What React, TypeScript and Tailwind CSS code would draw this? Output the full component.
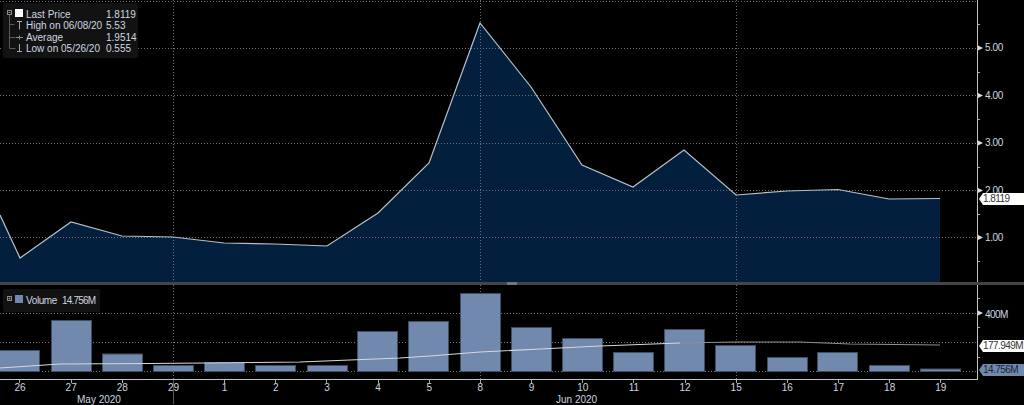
// Price and volume chart, dark terminal style
const font = "font-['Liberation_Sans',sans-serif]"

const pricePoints =
  '0,215 20,258 71,222 122,236 173,237 224,243 275,244 327,246 378,213 429,163 480,23 531,87 582,165 633,187 684,150 736,195 787,191 838,189.5 889,199 940,198.5'

const volumeLeft =
  '0,368 60,364 150,363.5 300,362 350,360 400,358 430,356 480,352 540,349 600,346 680,343'
const volumeRight = '680,343 736,342 800,342 850,344 940,345'

const bars = [
  { x: -1, top: 350 }, { x: 51, top: 320 }, { x: 102, top: 353.5 }, { x: 153, top: 365 },
  { x: 204, top: 362 }, { x: 255, top: 365 }, { x: 307, top: 365 }, { x: 357, top: 331 },
  { x: 408, top: 321 }, { x: 460, top: 293 }, { x: 511, top: 327 }, { x: 562, top: 338 },
  { x: 613, top: 352 }, { x: 664, top: 329 }, { x: 715, top: 345 }, { x: 767, top: 357 },
  { x: 817, top: 352 }, { x: 869, top: 365 }, { x: 920, top: 368.5 },
]

const days = ['26', '27', '28', '29', '1', '2', '3', '4', '5', '8', '9', '10', '11', '12', '15', '16', '17', '18', '19']

const gridV = [173, 480, 736]

function Tree() {
  return (
    <svg width="23" height="52" viewBox="0 0 23 52" className="shrink-0">
      <rect x="4.5" y="7.5" width="4" height="4" fill="none" stroke="#8a8a8a" />
      <path d="M5.5 9.5h2" stroke="#8a8a8a" />
      <path d="M6.5 12v33.5M6.5 21.5h5M6.5 34.5h6M6.5 45.5h6" stroke="#5c5c5c" />
      <rect x="12" y="6" width="8" height="8" fill="#fff" />
      <path d="M14 18.5h5M16.5 18.5v8" stroke="#a8a8a8" />
      <path d="M13 34.5h7M16.5 32.5v4" stroke="#8a8a8a" />
      <path d="M14 48.5h5M16.5 41v7.5" stroke="#a8a8a8" />
    </svg>
  )
}

function Tag({ text, className }: { text: string; className: string }) {
  return (
    <div className={`absolute right-0 h-[12px] w-[45px] whitespace-nowrap pl-[4px] text-[10px] leading-[12px] tracking-[-0.55px] [clip-path:polygon(4px_0,100%_0,100%_100%,4px_100%,0_50%)] ${className}`}>
      {text}
    </div>
  )
}

export default function App() {
  return (
    <div className={`relative h-[405px] w-[1024px] overflow-hidden bg-black text-[10px] text-[#cfd7e0] ${font}`}>
      {/* price pane */}
      <div className="flex h-[282px]">
        <svg width="984" height="282" viewBox="0 0 984 282" className="shrink-0">
          <polygon points={`${pricePoints} 940,282 0,282`} fill="#021f3d" />
          {[1.5, 48.5, 95.5, 143.5, 190.5, 237.5].map((y) => (
            <line key={y} x1="0" x2="977" y1={y} y2={y} stroke="#6b6f75" strokeDasharray="1 2" />
          ))}
          {gridV.map((x) => (
            <line key={x} x1={x + 0.5} x2={x + 0.5} y1="0" y2="282" stroke="#6b6f75" strokeDasharray="1 2" />
          ))}
          <polyline points={pricePoints} fill="none" stroke="#b9c0c7" strokeWidth="1.2" />
          <line x1="977.5" x2="977.5" y1="0" y2="282" stroke="#c4c4c4" />
          {[24, 72, 119, 167, 214, 261].map((y) => (
            <line key={y} x1="978" x2="980" y1={y + 0.5} y2={y + 0.5} stroke="#aaa" />
          ))}
          {[48, 95.5, 143, 190.5, 237.5].map((y) => (
            <polygon key={y} points={`978,${y - 2.5} 983,${y} 978,${y + 2.5}`} fill="#ddd" />
          ))}
        </svg>
        <div className="flex flex-1 flex-col pt-[24px] tracking-[-0.4px]">
          {['5.00', '4.00', '3.00', '2.00', '1.00'].map((v) => (
            <div key={v} className="flex h-[47.5px] items-center pl-px">{v}</div>
          ))}
        </div>
      </div>

      {/* divider */}
      <div className="flex h-[3px] justify-center bg-[#444]">
        <div className="h-[3px] w-[10px] bg-[#777]" />
      </div>

      {/* volume pane */}
      <div className="flex h-[95px]">
        <svg width="984" height="95" viewBox="0 285 984 95" className="shrink-0">
          {[313.5, 342.5, 371.5].map((y) => (
            <line key={y} x1="0" x2="977" y1={y} y2={y} stroke="#74777c" strokeDasharray="1 2" />
          ))}
          {gridV.map((x) => (
            <line key={x} x1={x + 0.5} x2={x + 0.5} y1="285" y2="379" stroke="#6b6f75" strokeDasharray="1 2" />
          ))}
          {bars.map((b) => (
            <rect key={b.x} x={b.x + 0.5} y={b.top + 0.5} width="40" height={371 - b.top} fill="#7089ad" stroke="#3f4e63" />
          ))}
          <polyline points={volumeLeft} fill="none" stroke="#d5d8dc" strokeWidth="1.1" />
          <polyline points={volumeRight} fill="none" stroke="#8f8f8f" strokeWidth="1.2" />
          <line x1="977.5" x2="977.5" y1="285" y2="380" stroke="#c4c4c4" />
          <line x1="0" x2="978" y1="379.5" y2="379.5" stroke="#c4c4c4" strokeWidth="1.2" />
          {[298, 327, 357].map((y) => (
            <line key={y} x1="978" x2="980" y1={y + 0.5} y2={y + 0.5} stroke="#aaa" />
          ))}
          <polygon points="978,310.5 983,313 978,315.5" fill="#ddd" />
        </svg>
        <div className="pl-px pt-[22px] tracking-[-0.6px]">400M</div>
      </div>

      {/* date axis */}
      <div className="-ml-[5.6px] flex w-[983px]">
        {days.map((d) => (
          <div key={d} className="relative flex w-[51.17px] flex-col items-center">
            <div className="h-[3px] w-px bg-[#aaa]" />
            <div className="leading-[10px]">{d}</div>
            {d === '29' && <div className="absolute left-1/2 top-0 h-[24px] w-px bg-[#555]" />}
          </div>
        ))}
      </div>
      <div className="flex pt-[1px] leading-[12px]">
        <div className="w-[478px] pl-[77px]">May 2020</div>
        <div className="pl-[78px]">Jun 2020</div>
      </div>

      {/* legends over the plot */}
      <div className="absolute left-[3px] top-[3px] flex h-[55px] w-[135px] rounded-[2px] bg-[#121212]">
        <Tree />
        <div className="grid grid-cols-[80px_auto] content-start pt-[6px] leading-[11.4px]">
          <span>Last Price</span><span>1.8119</span>
          <span>High on 06/08/20</span><span>5.53</span>
          <span>Average</span><span>1.9514</span>
          <span>Low on 05/26/20</span><span>0.555</span>
        </div>
      </div>
      <div className="absolute left-[3px] top-[289px] flex h-[23px] w-[97px] items-center gap-[5px] whitespace-nowrap rounded-[2px] bg-[#121212]">
        <svg width="23" height="23" viewBox="0 0 23 23" className="-mr-[5px] shrink-0">
          <rect x="4.5" y="7.5" width="4" height="4" fill="none" stroke="#8a8a8a" />
          <path d="M5.5 9.5h2M6.5 8.5v2" stroke="#8a8a8a" />
          <rect x="12" y="6" width="8" height="8" fill="#7089ad" />
        </svg>
        <span className="tracking-[-0.4px]">Volume</span>
        <span className="tracking-[-0.8px]">14.756M</span>
      </div>

      {/* last value tags */}
      <Tag text="1.8119" className="top-[193px] bg-white text-[#333]" />
      <Tag text="177.949M" className="top-[340px] bg-white text-[#333]" />
      <Tag text="14.756M" className="top-[364px] bg-[#7089ad] text-[#1a2433]" />
    </div>
  )
}
